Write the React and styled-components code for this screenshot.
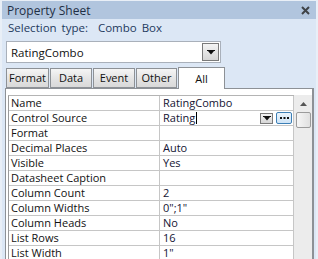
import React from "react";
import styled, { createGlobalStyle } from "styled-components";

const GlobalStyle = createGlobalStyle`
  html, body {
    margin: 0;
    padding: 0;
    background: #ffffff;
  }
  body {
    font-family: "Open Sans", "Liberation Sans", sans-serif;
    font-size: 11px;
  }
`;

const Panel = styled.div`
  width: 318px;
  height: 259px;
  box-sizing: border-box;
  background: #dce7f5;
  border-top: 1px solid #e9eff7;
  border-left: 2px solid #e9eff7;
  border-right: 2px solid #e9eff7;
  display: flex;
  flex-direction: column;
  overflow: hidden;
`;

const TitleBar = styled.div`
  height: 18px;
  flex: none;
  background: #b1c5de;
  display: flex;
  align-items: center;
  justify-content: space-between;
  padding: 0 6px 0 5px;
  color: #1f2f45;
  font-size: 12px;
`;

const SelectionLine = styled.div`
  height: 17px;
  line-height: 17px;
  padding-left: 6px;
  color: #1e3a5e;
  font-size: 11.5px;
  word-spacing: 2px;
`;

const Combo = styled.div`
  margin: 5px 0 0 4px;
  width: 215px;
  height: 22px;
  box-sizing: border-box;
  background: #fff;
  border: 1px solid #a9b0ba;
  display: flex;
  align-items: center;
  justify-content: space-between;
  padding: 0 0 0 4px;
  color: #111;
  font-size: 11.5px;
`;

const DropButton = styled.div`
  width: ${(p) => p.$w}px;
  height: ${(p) => p.$h}px;
  box-sizing: border-box;
  margin-right: 1px;
  border: 1px solid #7a7a7a;
  background: linear-gradient(#f4f4f4, #d6d6d6);
  display: flex;
  align-items: center;
  justify-content: center;
`;

const TabStrip = styled.div`
  display: flex;
  align-items: flex-end;
  height: 21px;
  margin-top: 4px;
  padding-left: 4px;
  position: relative;
  z-index: 1;
`;

const Tab = styled.div`
  width: ${(p) => p.$w}px;
  height: ${(p) => (p.$active ? 22 : 20)}px;
  margin-left: ${(p) => p.$gap}px;
  box-sizing: border-box;
  border: 1px solid #8d9196;
  border-bottom: ${(p) => (p.$active ? "none" : "1px solid #8d9196")};
  background: ${(p) =>
    p.$active ? "#ffffff" : "linear-gradient(#f5f5f5, #e2e2e2 60%, #d9d9d9)"};
  display: flex;
  align-items: center;
  justify-content: center;
  color: #111;
  font-size: 11px;
  line-height: 14px;
  margin-bottom: ${(p) => (p.$active ? "-1px" : "0")};
`;

const TabBody = styled.div`
  flex: 1;
  margin: 0 2px 0 3px;
  box-sizing: border-box;
  background: #fff;
  border: 1px solid #8d9196;
  border-right-width: 2px;
  border-bottom: none;
  padding: 6px 0 0 2px;
  display: flex;
  min-height: 0;
`;

const Grid = styled.div`
  flex: 1;
  border-top: 1px solid #b4b4b4;
  border-left: 1px solid #9a9a9a;
  display: flex;
  flex-direction: column;
`;

const Row = styled.div`
  display: flex;
  height: 15px;
  box-sizing: border-box;
  border-bottom: 1px solid #c6c6c6;
  flex: none;
`;

const NameCell = styled.div`
  width: 151px;
  box-sizing: border-box;
  border-right: 1px solid #c6c6c6;
  padding-left: 2px;
  line-height: 14px;
  color: #111;
  font-size: 11px;
  white-space: nowrap;
  overflow: hidden;
`;

const ValueCell = styled.div`
  flex: 1;
  box-sizing: border-box;
  border-right: 1px solid #c6c6c6;
  padding-left: 3px;
  line-height: 14px;
  color: #141433;
  font-size: 11px;
  display: flex;
  align-items: center;
  white-space: nowrap;
`;

const Caret = styled.span`
  display: inline-block;
  width: 1px;
  height: 12px;
  background: #000;
  margin-left: 1px;
`;

const CellButtons = styled.div`
  margin-left: auto;
  display: flex;
  align-items: center;
  gap: 2px;
  margin-right: 1px;
`;

const EllipsisButton = styled.div`
  width: 16px;
  height: 12px;
  box-sizing: border-box;
  border: 1px solid #3c7fb6;
  border-radius: 2px;
  background: linear-gradient(#eaf4fc, #cfe4f6);
  display: flex;
  align-items: center;
  justify-content: center;
`;

const ScrollBar = styled.div`
  width: 18px;
  flex: none;
  background: #ececec;
  display: flex;
  flex-direction: column;
  align-items: center;
`;

const ScrollArrow = styled.div`
  height: 17px;
  width: 100%;
  display: flex;
  align-items: center;
  justify-content: center;
`;

const Thumb = styled.div`
  width: 15px;
  height: 16px;
  box-sizing: border-box;
  border: 1px solid #9b9b9b;
  border-radius: 2px;
  background: linear-gradient(90deg, #f6f6f6, #e0e0e0);
`;

const rows = [
  ["Name", "RatingCombo"],
  ["Control Source", "Rating", true],
  ["Format", ""],
  ["Decimal Places", "Auto"],
  ["Visible", "Yes"],
  ["Datasheet Caption", ""],
  ["Column Count", "2"],
  ["Column Widths", '0";1"'],
  ["Column Heads", "No"],
  ["List Rows", "16"],
  ["List Width", '1"'],
];

const tabs = [
  ["Format", 43, 0],
  ["Data", 42, 1],
  ["Event", 42, 1],
  ["Other", 41, 1],
  ["All", 47, 1],
];

const DownArrow = () => (
  <svg width="8" height="5" viewBox="0 0 8 5">
    <rect x="0" y="0" width="8" height="1" fill="#111" />
    <polygon points="1,1 7,1 4,4.5" fill="#111" />
  </svg>
);

const App = () => (
  <>
    <GlobalStyle />
    <Panel>
      <TitleBar>
        <span>Property Sheet</span>
        <svg width="9" height="9" viewBox="0 0 9 9">
          <path d="M1 1 L8 8 M8 1 L1 8" stroke="#3f4347" strokeWidth="2" />
        </svg>
      </TitleBar>
      <SelectionLine>Selection type:&nbsp; Combo Box</SelectionLine>
      <Combo>
        <span>RatingCombo</span>
        <DropButton $w={17} $h={18}>
          <DownArrow />
        </DropButton>
      </Combo>
      <TabStrip>
        {tabs.map(([label, w, gap]) => (
          <Tab key={label} $w={w} $gap={gap} $active={label === "All"}>
            {label}
          </Tab>
        ))}
      </TabStrip>
      <TabBody>
        <Grid>
          {rows.map(([name, value, editing]) => (
            <Row key={name}>
              <NameCell>{name}</NameCell>
              <ValueCell>
                {value}
                {editing && (
                  <>
                    <Caret />
                    <CellButtons>
                      <DropButton $w={13} $h={11}>
                        <DownArrow />
                      </DropButton>
                      <EllipsisButton>
                        <svg width="9" height="2" viewBox="0 0 9 2">
                          <rect x="0" y="0" width="2" height="2" fill="#111" />
                          <rect x="3.5" y="0" width="2" height="2" fill="#111" />
                          <rect x="7" y="0" width="2" height="2" fill="#111" />
                        </svg>
                      </EllipsisButton>
                    </CellButtons>
                  </>
                )}
              </ValueCell>
            </Row>
          ))}
        </Grid>
        <ScrollBar>
          <ScrollArrow>
            <svg width="7" height="4" viewBox="0 0 7 4">
              <polygon points="0,4 7,4 3.5,0" fill="#555" />
            </svg>
          </ScrollArrow>
          <Thumb />
        </ScrollBar>
      </TabBody>
    </Panel>
  </>
);

export default App;
